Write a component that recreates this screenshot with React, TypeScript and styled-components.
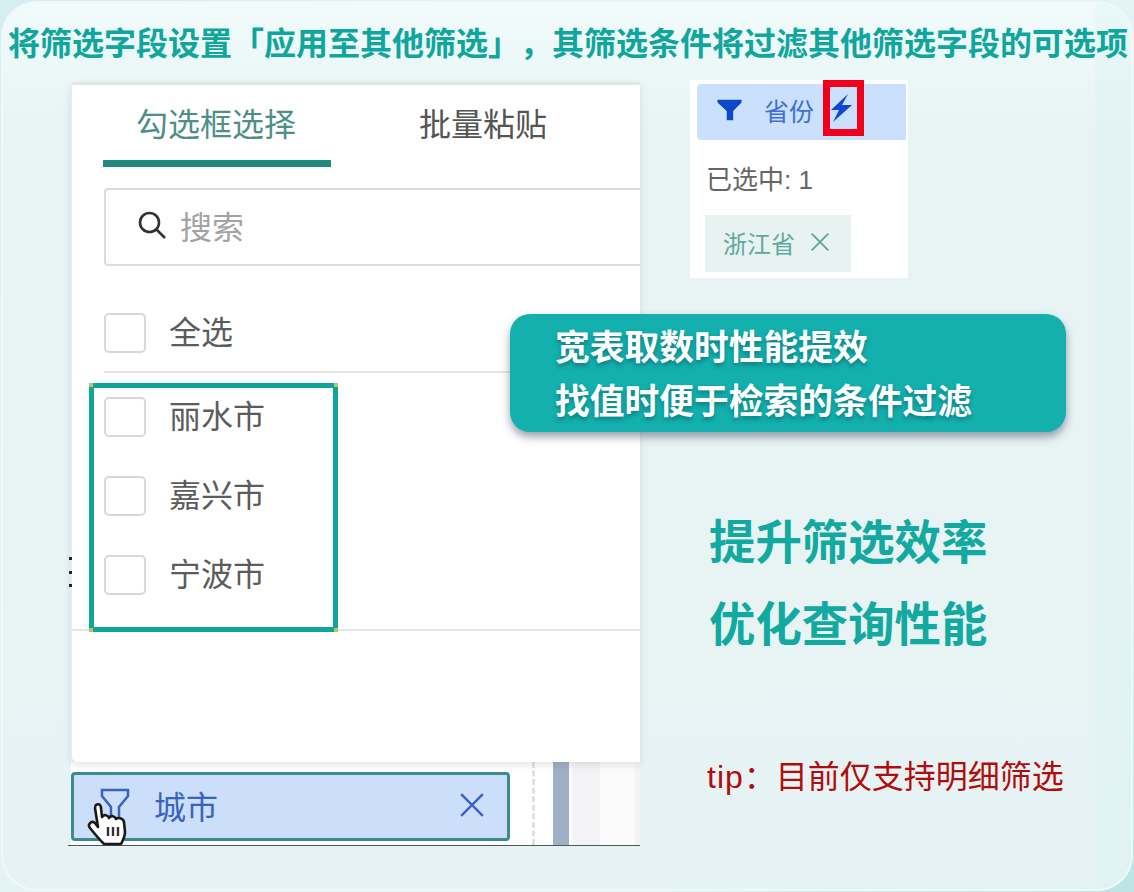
import React from "react";
import styled, { createGlobalStyle } from "styled-components";

const GlobalStyle = createGlobalStyle`
  html, body { margin: 0; padding: 0; background: #e0f2f3; }
  body { font-family: "Liberation Sans", "Noto Sans CJK SC", sans-serif; }
  * { box-sizing: border-box; }
`;

const Page = styled.div`
  width: 1134px;
  height: 892px;
  padding: 1px;
  background: linear-gradient(135deg, #d6eef1 0%, #e4f4f4 30%, #e4f4f4 75%, #bbe4e4 100%);
`;

const Frame = styled.div`
  position: relative;
  width: 1132px;
  height: 890px;
  overflow: hidden;
  border-radius: 36px;
  border: 2px solid #eef9f9;
  background:
    linear-gradient(90deg, transparent 1092px, rgba(214, 240, 240, 0.3) 1092px),
    linear-gradient(180deg, #f1fbfb 0%, #e8f4f4 14%, #e8f4f4 60%, #e6f3f4 100%);
`;

const Title = styled.h1`
  margin: 0;
  height: 79px;
  padding: 23px 0 0 5px;
  font-size: 32px;
  line-height: 36px;
  font-weight: 700;
  white-space: nowrap;
  text-spacing-trim: space-all;
  color: #0fa69d;
`;

const Stage = styled.div`
  position: relative;
  display: flex;
  align-items: flex-start;
  padding-left: 65px;
`;

const LeftColumn = styled.div`
  width: 572px;
  display: flex;
  flex-direction: column;
`;

const Panel = styled.div`
  margin-left: 3px;
  width: 569px;
  height: 680px;
  background: #fff;
  border-top: 3px solid #e2e6e6;
  border-left: 1px solid #e8ecec;
  border-radius: 4px 0 0 6px;
  box-shadow: 0 3px 9px rgba(0, 0, 0, 0.1);
  display: flex;
  flex-direction: column;
  position: relative;
  z-index: 1;
`;

const Tabs = styled.div`
  display: flex;
  padding: 0 0 0 31px;
  height: 82px;
`;

const Tab = styled.div<{ $active?: boolean }>`
  width: ${(p) => (p.$active ? "228px" : "auto")};
  margin-left: ${(p) => (p.$active ? "0" : "88px")};
  height: 82px;
  padding: 20px 0 0 ${(p) => (p.$active ? "33px" : "0")};
  font-size: 32px;
  line-height: 40px;
  white-space: nowrap;
  color: ${(p) => (p.$active ? "#4f8f88" : "#555")};
  border-bottom: ${(p) => (p.$active ? "7px solid #1f8a7d" : "0")};
`;

const SearchBox = styled.div`
  margin: 21px 0 0 32px;
  height: 78px;
  border: 2px solid #dcdcdc;
  border-right: 0;
  border-radius: 4px 0 0 4px;
  display: flex;
  align-items: center;
  gap: 13px;
  padding: 0 0 4px 31px;
  font-size: 32px;
  color: #a3a3a3;
`;

const Row = styled.div`
  display: flex;
  align-items: center;
  gap: 23px;
  padding-left: 32px;
  font-size: 32px;
  line-height: 40px;
  color: #5c5c5c;
`;

const AllRow = styled(Row)`
  margin-top: 47px;
  height: 40px;
`;

const Divider = styled.div`
  margin: 18px 0 0 32px;
  height: 2px;
  background: #e4e4e4;
`;

const Box = styled.span`
  width: 42px;
  height: 40px;
  border: 2px solid #d8d8d8;
  border-radius: 5px;
  flex: none;
`;

const List = styled.div`
  position: relative;
  margin-top: 24px;
  height: 232px;
  display: flex;
  flex-direction: column;
  gap: 40px;
`;

const ListRow = styled(Row)`
  height: 39px;
`;

const Selection = styled.div`
  position: absolute;
  left: 17px;
  top: -14px;
  width: 249px;
  height: 249px;
  border: 5px solid #10a59b;
`;

const Handle = styled.i<{ $x: string; $y: string }>`
  position: absolute;
  width: 4px;
  height: 4px;
  background: #b5c95a;
  ${(p) => p.$x}: -5px;
  ${(p) => p.$y}: -5px;
`;

const LongDivider = styled.div`
  height: 2px;
  background: #e6e6e6;
  margin-top: 0;
`;

const Dots = styled.div`
  position: absolute;
  left: -3px;
  top: 472px;
  width: 3px;
  height: 30px;
  display: flex;
  flex-direction: column;
  justify-content: space-between;
  i { display: block; height: 3px; background: #222; }
`;

const Strip = styled.div`
  height: 84px;
  margin-top: 0;
  background: linear-gradient(90deg, transparent 3px, #fff 3px);
  border-bottom: 1px solid #4a5a5a;
  display: flex;
  align-items: flex-start;
  padding: 10px 0 0 3px;
  position: relative;
`;

const Chip = styled.div`
  position: relative;
  z-index: 2;
  width: 439px;
  height: 69px;
  background: #cbdffa;
  border: 3px solid #3f8a8c;
  border-radius: 4px;
  display: flex;
  align-items: center;
  padding: 0 22px 4px 25px;
  gap: 23px;
  color: #3a62bf;
  font-size: 32px;
`;

const ChipLabel = styled.span`
  flex: 1;
`;

const Hand = styled.svg`
  position: absolute;
  left: 13px;
  top: 27px;
`;

const DashLine = styled.div`
  margin: -10px 0 0 22px;
  width: 0;
  height: 83px;
  border-left: 3px dashed #dfe1e5;
`;

const Bar = styled.div`
  margin: -10px 0 0 18px;
  width: 16px;
  height: 83px;
  background: #9fb0c6;
`;

const BarShade = styled.div`
  margin-top: -10px;
  flex: 1;
  height: 83px;
  background: linear-gradient(
    90deg,
    #fcfcfd 0,
    #f3f3f5 6px,
    #f3f3f5 31px,
    #fbfbfc 31px,
    #fbfbfc 66px,
    #f4f4f5 66px
  );
`;

const RightColumn = styled.div`
  padding-left: 50px;
  display: flex;
  flex-direction: column;
`;

const ProvinceCard = styled.div`
  position: relative;
  width: 218px;
  height: 198px;
  margin-top: -2px;
  background: #fff;
  padding-top: 4px;
`;

const ProvinceHead = styled.div`
  margin-left: 7px;
  width: 209px;
  height: 56px;
  background: #cbe0fd;
  border-radius: 4px 0 0 4px;
  display: flex;
  align-items: center;
  padding: 0 0 4px 19px;
  color: #3f6fd0;
  font-size: 25px;
  gap: 21px;
`;

const RedMark = styled.div`
  position: absolute;
  left: 133px;
  top: 0;
  width: 41px;
  height: 56px;
  border: 7px solid #f0001a;
  display: flex;
  align-items: center;
  padding-left: 1px;
`;

const Selected = styled.div`
  margin: 22px 0 0 16px;
  font-size: 26px;
  line-height: 36px;
  color: #666;
`;

const Tag = styled.div`
  margin: 17px 0 0 15px;
  width: 146px;
  height: 57px;
  background: #e8f3f1;
  display: flex;
  align-items: center;
  gap: 15px;
  padding: 0 0 3px 18px;
  color: #5fa89d;
  font-size: 24px;
`;

const Callout = styled.div`
  position: absolute;
  z-index: 3;
  left: 507px;
  top: 232px;
  width: 556px;
  height: 118px;
  border-radius: 20px;
  background: #13b0ae;
  box-shadow: 0 5px 8px rgba(60, 70, 90, 0.5);
  padding: 7px 0 0 45px;
  color: #fff;
  font-size: 34.75px;
  font-weight: 700;
  line-height: 54px;
  white-space: nowrap;
  text-shadow: 0 3px 4px rgba(0, 80, 90, 0.5);
`;

const Slogans = styled.div`
  margin: 238px 0 0 19px;
  display: flex;
  flex-direction: column;
  gap: 28px;
`;

const Slogan = styled.div`
  font-size: 46.4px;
  line-height: 54px;
  font-weight: 700;
  color: #12a9a0;
  white-space: nowrap;
`;

const Tip = styled.div`
  margin: 105px 0 0 17px;
  font-size: 32px;
  line-height: 40px;
  color: #b30c0c;
  white-space: nowrap;
`;

const TipWord = styled.span`
  letter-spacing: 1px;
`;

const FilterSolid = () => (
  <svg width="27" height="24" viewBox="0 0 28 26">
    <path d="M1 2 H27 V5 L18 14 V24 H11 V14 L1 5 Z" fill="#0b47c9" />
  </svg>
);

const FilterOutline = () => (
  <svg width="32" height="40" viewBox="0 0 32 40" fill="none" stroke="#3a62bf" strokeWidth="2.5">
    <path d="M3 5 H29 V11 L20 22 V36 H12 V22 L3 11 Z" />
  </svg>
);

const Cross = ({ size, color, w }: { size: number; color: string; w: number }) => (
  <svg width={size} height={size} viewBox="0 0 24 24" stroke={color} strokeWidth={w} fill="none">
    <path d="M2 2 L22 22 M22 2 L2 22" />
  </svg>
);

const SearchIcon = () => (
  <svg width="30" height="30" viewBox="0 0 30 30" fill="none" stroke="#333" strokeWidth="2.6">
    <circle cx="12.5" cy="12.5" r="9.5" />
    <path d="M19.5 19.5 L28 28" />
  </svg>
);

const Bolt = () => (
  <svg width="21" height="28" viewBox="0 0 21 28">
    <path d="M17 0 L0 16 L8 16 L2 28 L21 11 L11 11 Z" fill="#1245d0" />
  </svg>
);

const cities = ["丽水市", "嘉兴市", "宁波市"];

export default function App() {
  return (
    <>
      <GlobalStyle />
      <Page>
        <Frame>
          <Title>将筛选字段设置「应用至其他筛选」，其筛选条件将过滤其他筛选字段的可选项</Title>
          <Stage>
            <LeftColumn>
              <Panel>
                <Tabs>
                  <Tab $active>勾选框选择</Tab>
                  <Tab>批量粘贴</Tab>
                </Tabs>
                <SearchBox>
                  <SearchIcon />
                  <span>搜索</span>
                </SearchBox>
                <AllRow>
                  <Box />
                  <span>全选</span>
                </AllRow>
                <Divider />
                <List>
                  {cities.map((c) => (
                    <ListRow key={c}>
                      <Box />
                      <span>{c}</span>
                    </ListRow>
                  ))}
                  <Selection>
                    <Handle $x="left" $y="top" />
                    <Handle $x="right" $y="top" />
                    <Handle $x="left" $y="bottom" />
                    <Handle $x="right" $y="bottom" />
                  </Selection>
                </List>
                <LongDivider />
                <Dots>
                  <i />
                  <i />
                  <i />
                </Dots>
              </Panel>
              <Strip>
                <Chip>
                  <FilterOutline />
                  <ChipLabel>城市</ChipLabel>
                  <Cross size={26} color="#3a62bf" w={2.2} />
                  <Hand width="44" height="44" viewBox="0 0 44 44">
                    <path
                      d="M8 6 C8 1 14 1 14 6 L15 15 C17 12 21 13 22 16 C24 13 28 14 29 17 C31 15 36 16 37 20 L38 30 C38 35 36 38 34 42 L17 42 C12 37 7 31 3 26 C0 22 5 18 8 21 L11 25 Z"
                      fill="#fff"
                      stroke="#1a1a1a"
                      strokeWidth="2.6"
                      strokeLinejoin="round"
                    />
                    <path d="M21 25 V34 M26 25 V34 M31 25 V34" stroke="#333" strokeWidth="2.4" />
                  </Hand>
                </Chip>
                <DashLine />
                <Bar />
                <BarShade />
              </Strip>
            </LeftColumn>
            <RightColumn>
              <ProvinceCard>
                <ProvinceHead>
                  <FilterSolid />
                  <span>省份</span>
                </ProvinceHead>
                <RedMark>
                  <Bolt />
                </RedMark>
                <Selected>已选中: 1</Selected>
                <Tag>
                  <span>浙江省</span>
                  <Cross size={20} color="#5fa89d" w={2.4} />
                </Tag>
              </ProvinceCard>
              <Slogans>
                <Slogan>提升筛选效率</Slogan>
                <Slogan>优化查询性能</Slogan>
              </Slogans>
              <Tip>
                <TipWord>tip</TipWord>：目前仅支持明细筛选
              </Tip>
            </RightColumn>
            <Callout>
              宽表取数时性能提效
              <br />
              找值时便于检索的条件过滤
            </Callout>
          </Stage>
        </Frame>
      </Page>
    </>
  );
}
